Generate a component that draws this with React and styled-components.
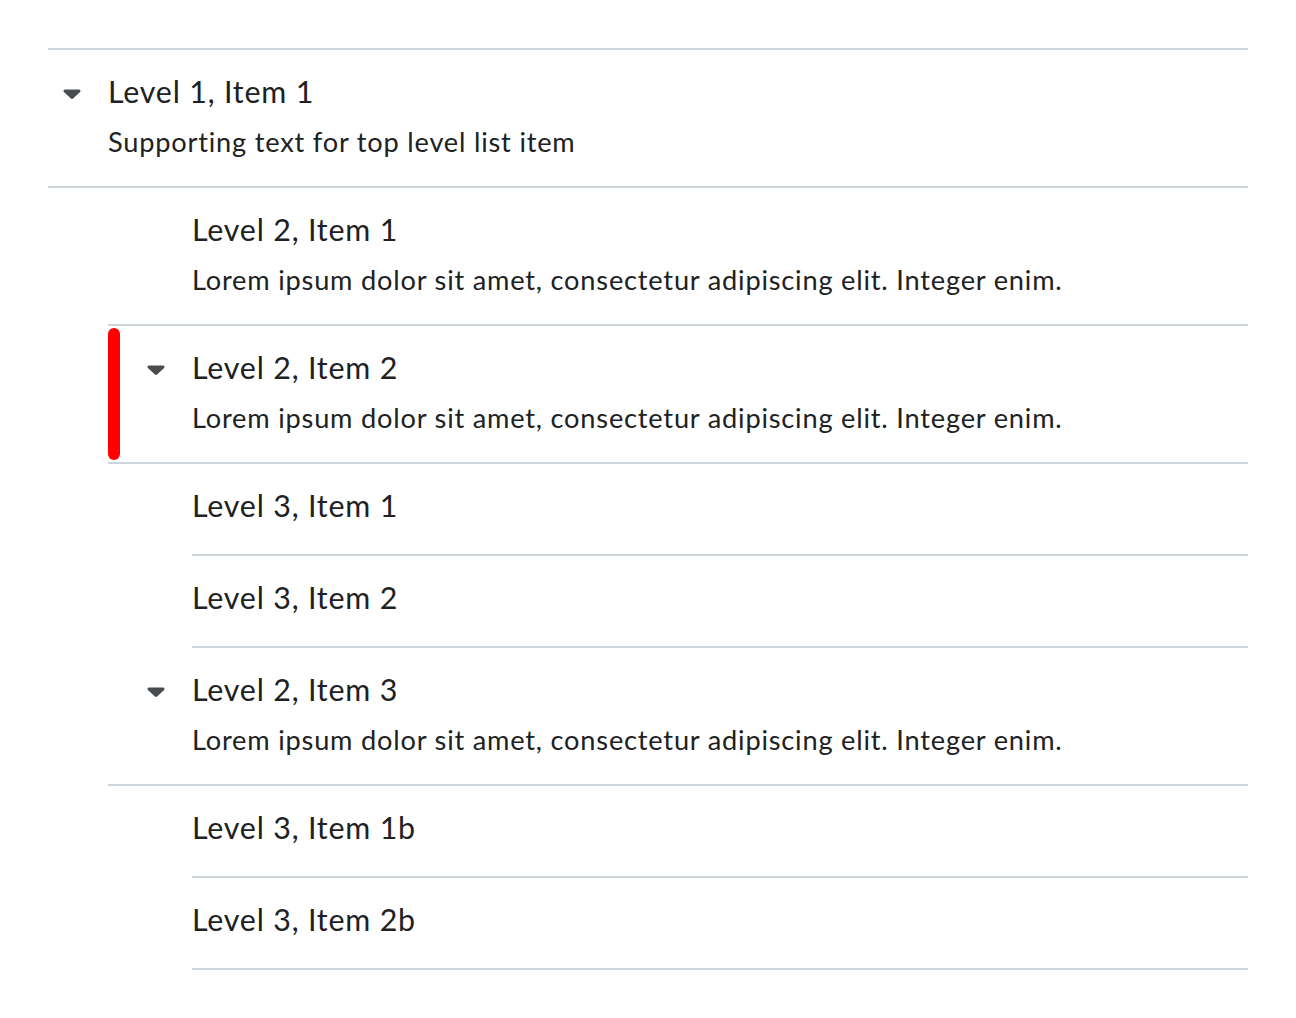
import React from 'react'
import styled, { createGlobalStyle, css } from 'styled-components'

const GlobalStyle = createGlobalStyle`
  body {
    margin: 0;
    background: #ffffff;
    font-family: Lato, "Noto Sans", sans-serif;
    color: #202122;
  }
`

const Page = styled.div`
  padding: 48px;
`

const List = styled.div`
  border-top: 2px solid #cdd5dc;
`

const Row = styled.div`
  position: relative;
  display: flex;
  margin-left: ${props => props.$indent}px;
  padding: 19px 0 ${props => (props.$compact ? 26 : 25)}px;
  border-bottom: 2px solid #cdd5dc;
  ${props => props.$focused && css`
    &::before {
      content: '';
      position: absolute;
      left: 0;
      top: 2px;
      bottom: 2px;
      width: 12px;
      border-radius: 6px;
      background: #ff0000;
    }
  `}
`

const Gutter = styled.div`
  flex-shrink: 0;
  width: ${props => props.$width}px;
  height: 45px;
  box-sizing: border-box;
  display: flex;
  align-items: center;
  justify-content: flex-end;
  padding-top: 4px;
  padding-right: ${props => (props.$width ? 26 : 0)}px;
`

const Content = styled.div`
  display: flex;
  flex-direction: column;
  gap: 9px;
`

const Title = styled.div`
  font-size: 30.4px;
  line-height: 45px;
  letter-spacing: 0.8px;
`

const Supporting = styled.div`
  font-size: 27.2px;
  line-height: 38px;
  letter-spacing: 0.8px;
`

const Caret = () => (
  <svg width="20" height="12" viewBox="0 0 20 12">
    <path
      d="M3 1.5h14c1.3 0 2 1.5 1.1 2.4l-7 6.6c-.6.6-1.6.6-2.2 0l-7-6.6C1 3 1.7 1.5 3 1.5z"
      fill="#494c4e"
    />
  </svg>
)

const levels = {
  1: { indent: 0, gutter: 60 },
  2: { indent: 60, gutter: 84 },
  3: { indent: 144, gutter: 0 },
}

const lorem = 'Lorem ipsum dolor sit amet, consectetur adipiscing elit. Integer enim.'

const items = [
  { level: 1, title: 'Level 1, Item 1', text: 'Supporting text for top level list item', open: true },
  { level: 2, title: 'Level 2, Item 1', text: lorem },
  { level: 2, title: 'Level 2, Item 2', text: lorem, open: true, focused: true },
  { level: 3, title: 'Level 3, Item 1' },
  { level: 3, title: 'Level 3, Item 2' },
  { level: 2, title: 'Level 2, Item 3', text: lorem, open: true },
  { level: 3, title: 'Level 3, Item 1b' },
  { level: 3, title: 'Level 3, Item 2b' },
]

export default function App() {
  return (
    <Page>
      <GlobalStyle />
      <List>
        {items.map(item => {
          const { indent, gutter } = levels[item.level]
          return (
            <Row
              key={item.title}
              $indent={indent}
              $compact={!item.text}
              $focused={item.focused}
            >
              <Gutter $width={gutter}>{item.open && <Caret />}</Gutter>
              <Content>
                <Title>{item.title}</Title>
                {item.text && <Supporting>{item.text}</Supporting>}
              </Content>
            </Row>
          )
        })}
      </List>
    </Page>
  )
}
